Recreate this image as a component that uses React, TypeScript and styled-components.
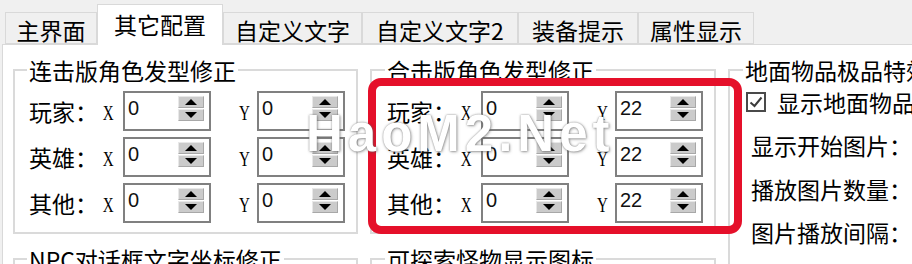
import React from "react";
import styled, { createGlobalStyle } from "styled-components";

const Global = createGlobalStyle`
  html, body { margin: 0; padding: 0; background: #f0f0f0; }
  body { font-family: "Noto Sans CJK SC", "Noto Sans", sans-serif; color: #000; }
`;

const Page = styled.div`
  position: relative;
  width: 912px;
  height: 264px;
  overflow: hidden;
  background: #f0f0f0;
`;

const TabStrip = styled.div`
  position: relative;
  z-index: 1;
  display: flex;
  align-items: flex-end;
  height: 44px;
  box-sizing: border-box;
  padding-left: 5px;
`;

const Tab = styled.div<{ $w: number; $active?: boolean }>`
  box-sizing: border-box;
  width: ${(p) => p.$w}px;
  height: ${(p) => (p.$active ? 41 : 32)}px;
  margin-bottom: ${(p) => (p.$active ? -1 : 0)}px;
  padding-top: ${(p) => (p.$active ? 6 : 4)}px;
  background: ${(p) => (p.$active ? "#ffffff" : "#f0f0f0")};
  border: 1px solid #d9d9d9;
  border-bottom: ${(p) => (p.$active ? "none" : "1px solid #d9d9d9")};
  font-size: 23px;
  line-height: 26px;
  text-align: center;
  white-space: nowrap;
`;

const Panel = styled.div`
  box-sizing: border-box;
  height: 220px;
  margin-left: 2px;
  background: #ffffff;
  border-top: 1px solid #d9d9d9;
  border-left: 1px solid #d9d9d9;
  padding: 12px 0 0 10px;
  display: grid;
  grid-template-columns: 345px 346px 300px;
  grid-template-rows: 177px 1fr;
  column-gap: 12px;
  row-gap: 12px;
  align-items: start;
  overflow: hidden;
`;

const Group = styled.fieldset<{ $pl: number; $side?: boolean }>`
  margin: 0;
  min-width: 0;
  padding: 8px 11px 9px ${(p) => p.$pl}px;
  border: 2px solid #dadada;
  ${(p) => (p.$side ? "grid-column: 3; grid-row: 1 / span 2; height: 260px;" : "")}
`;

const Legend = styled.legend`
  margin-left: -2px;
  padding: 0 2px;
  font-size: 23px;
  line-height: 26px;
  white-space: nowrap;
`;

const Rows = styled.div`
  display: flex;
  flex-direction: column;
  gap: 6px;
`;

const FieldRow = styled.div`
  display: grid;
  grid-template-columns: 73px 21px 88px 46px 88px;
  height: 40px;
  align-items: center;
`;

const RowLabel = styled.span`
  font-size: 23px;
  line-height: 26px;
  white-space: nowrap;
`;

const Axis = styled.span<{ $right?: boolean }>`
  display: block;
  font-family: "Liberation Serif", "Times New Roman", serif;
  font-size: 21px;
  line-height: 24px;
  margin-top: 3px;
  transform: scaleX(0.72);
  transform-origin: ${(p) => (p.$right ? "right" : "left")} center;
  text-align: ${(p) => (p.$right ? "right" : "left")};
  padding-right: ${(p) => (p.$right ? 10 : 0)}px;
  padding-left: ${(p) => (p.$right ? 0 : 1)}px;
`;

const SpinBox = styled.div`
  box-sizing: border-box;
  height: 40px;
  border: 2px solid #808080;
  background: #ffffff;
  display: flex;
  align-items: flex-start;
  padding: 3px 5px 0 3px;
`;

const Value = styled.span`
  flex: 1;
  font-family: "Liberation Sans", Arial, sans-serif;
  font-size: 20px;
  line-height: 24px;
  color: #111;
`;

const SpinButtons = styled.div`
  display: flex;
  flex-direction: column;
  gap: 1px;
  width: 26px;
`;

const SpinBtn = styled.div<{ $up?: boolean }>`
  box-sizing: border-box;
  width: 26px;
  height: 12px;
  background: #cbcbcb;
  border-top: 1px solid #e8e8e8;
  border-left: 1px solid #e8e8e8;
  border-right: 1px solid #a8a8a8;
  border-bottom: 1px solid #a8a8a8;
  display: flex;
  align-items: center;
  justify-content: center;
  &::after {
    content: "";
    width: 0;
    height: 0;
    border-left: 6px solid transparent;
    border-right: 6px solid transparent;
    ${(p) => (p.$up ? "border-bottom: 6px solid #000;" : "border-top: 6px solid #000;")}
  }
`;

const CheckRow = styled.div`
  display: flex;
  align-items: center;
  gap: 11px;
  height: 20px;
  margin-top: 1px;
  margin-left: 1px;
  white-space: nowrap;
`;

const CheckBox = styled.span`
  flex: none;
  box-sizing: border-box;
  width: 20px;
  height: 20px;
  border: 2px solid #4a4a4a;
  background: #ffffff;
  display: inline-flex;
  align-items: center;
  justify-content: center;
`;

const CheckText = styled.span`
  font-size: 23px;
  line-height: 26px;
`;

const SideRow = styled.div<{ $mt: number }>`
  height: 40px;
  display: flex;
  align-items: center;
  margin-top: ${(p) => p.$mt}px;
  margin-left: 6px;
  font-size: 23px;
  line-height: 26px;
  white-space: nowrap;
`;

const Highlight = styled.div`
  position: absolute;
  left: 368px;
  top: 78px;
  width: 374px;
  height: 156px;
  box-sizing: border-box;
  border: 8px solid #e5102a;
  border-radius: 13px;
  pointer-events: none;
  z-index: 2;
`;

const Watermark = styled.div`
  position: absolute;
  left: 306px;
  top: 104px;
  z-index: 3;
  font-family: "Liberation Sans", Arial, sans-serif;
  font-weight: 700;
  font-size: 51px;
  letter-spacing: 5px;
  white-space: nowrap;
  color: #ffffff;
  text-shadow: 0 0 2px rgba(90, 90, 90, 0.7), 1px 1px 3px rgba(90, 90, 90, 0.5);
  pointer-events: none;
`;

type Pair = { label: string; x: string; y: string };

const Spin: React.FC<{ value: string }> = ({ value }) => (
  <SpinBox>
    <Value>{value}</Value>
    <SpinButtons>
      <SpinBtn $up />
      <SpinBtn />
    </SpinButtons>
  </SpinBox>
);

const CoordGroup: React.FC<{ title: string; pl: number; rows: Pair[] }> = ({ title, pl, rows }) => (
  <Group $pl={pl}>
    <Legend>{title}</Legend>
    <Rows>
      {rows.map((r) => (
        <FieldRow key={r.label}>
          <RowLabel>{r.label}</RowLabel>
          <Axis>X</Axis>
          <Spin value={r.x} />
          <Axis $right>Y</Axis>
          <Spin value={r.y} />
        </FieldRow>
      ))}
    </Rows>
  </Group>
);

const tabs = [
  { t: "主界面", w: 92 },
  { t: "其它配置", w: 126, active: true },
  { t: "自定义文字", w: 139 },
  { t: "自定义文字2", w: 156 },
  { t: "装备提示", w: 120 },
  { t: "属性显示", w: 116 },
];

export default function App() {
  return (
    <Page>
      <Global />
      <TabStrip>
        {tabs.map((t) => (
          <Tab key={t.t} $w={t.w} $active={t.active}>
            {t.t}
          </Tab>
        ))}
      </TabStrip>
      <Panel>
        <CoordGroup
          title="连击版角色发型修正"
          pl={14}
          rows={[
            { label: "玩家：", x: "0", y: "0" },
            { label: "英雄：", x: "0", y: "0" },
            { label: "其他：", x: "0", y: "0" },
          ]}
        />
        <CoordGroup
          title="合击版角色发型修正"
          pl={15}
          rows={[
            { label: "玩家：", x: "0", y: "22" },
            { label: "英雄：", x: "0", y: "22" },
            { label: "其他：", x: "0", y: "22" },
          ]}
        />
        <Group $pl={15} $side>
          <Legend>地面物品极品特效</Legend>
          <CheckRow>
            <CheckBox>
              <svg width="16" height="16" viewBox="0 0 16 16">
                <path d="M2.5 8.5 L6.5 12 L13.5 3.5" fill="none" stroke="#3c3c3c" strokeWidth="2" />
              </svg>
            </CheckBox>
            <CheckText>显示地面物品特效</CheckText>
          </CheckRow>
          <SideRow $mt={13}>显示开始图片：</SideRow>
          <SideRow $mt={4}>播放图片数量：</SideRow>
          <SideRow $mt={3}>图片播放间隔：</SideRow>
        </Group>
        <Group $pl={14}>
          <Legend>NPC对话框文字坐标修正</Legend>
        </Group>
        <Group $pl={15}>
          <Legend>可探索怪物显示图标</Legend>
        </Group>
      </Panel>
      <Highlight />
      <Watermark>HaoM2.Net</Watermark>
    </Page>
  );
}
